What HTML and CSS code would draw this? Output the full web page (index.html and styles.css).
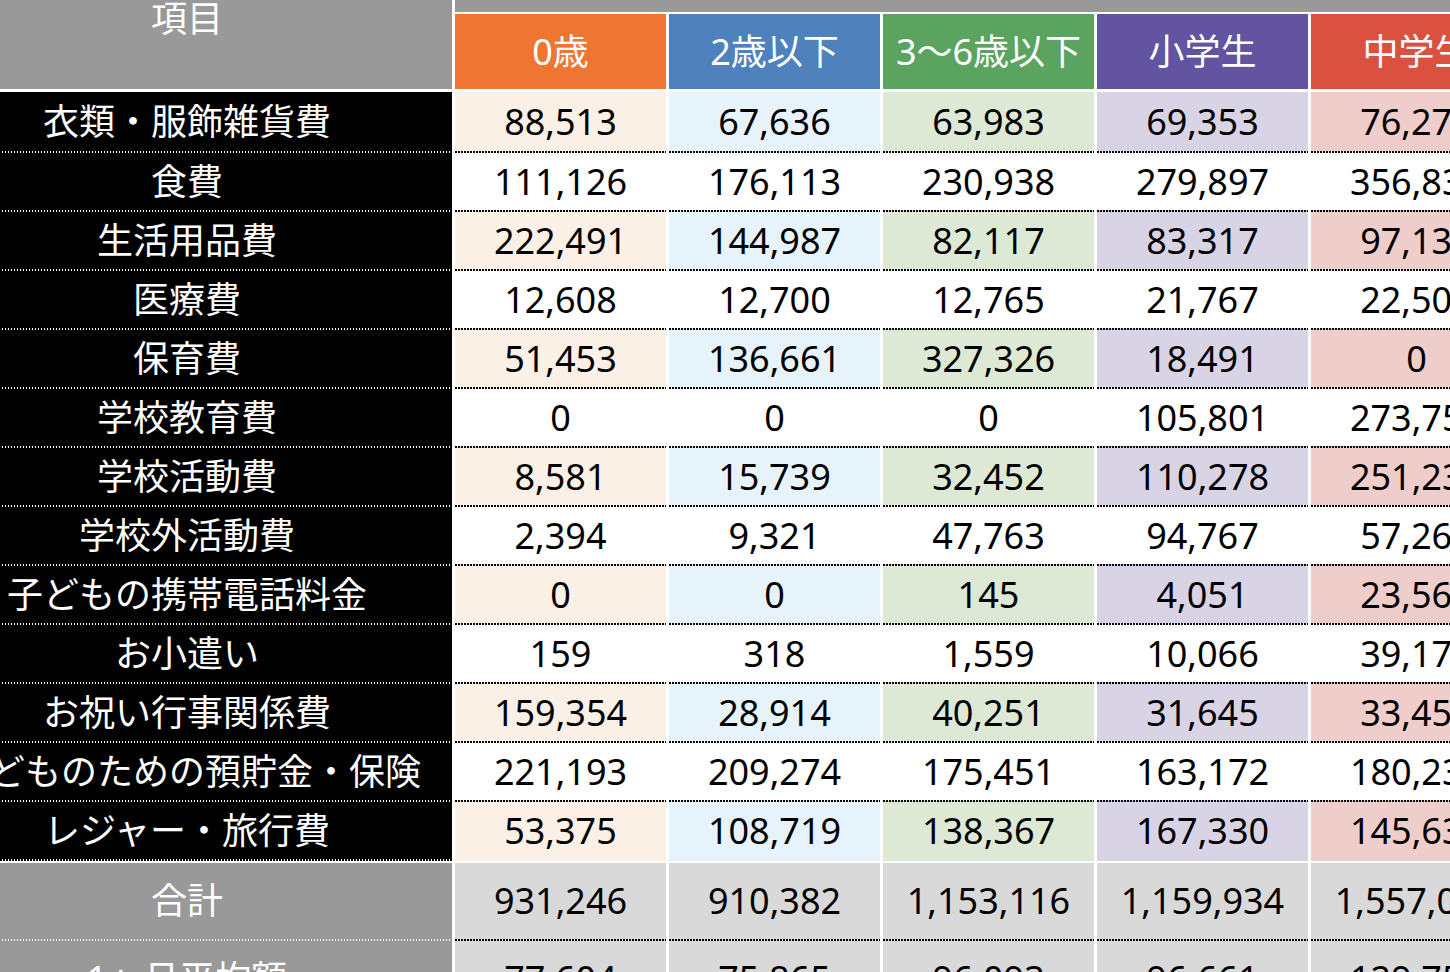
FILE: index.html
```html
<!DOCTYPE html>
<html lang="ja">
<head>
<meta charset="utf-8">
<title>子どもにかかる費用</title>
<link rel="stylesheet" href="styles.css">
</head>
<body>
<div class="sheet">
  <div class="head">
    <div class="h-item">項目</div>
    <div class="h-group">年齢区分</div>
    <div class="h-age a1">0歳</div>
    <div class="h-age a2">2歳以下</div>
    <div class="h-age a3">3〜6歳以下</div>
    <div class="h-age a4">小学生</div>
    <div class="h-age a5">中学生</div>
  </div>

  <div class="row alt"><div class="lab">衣類・服飾雑貨費</div><div class="v a1">88,513</div><div class="v a2">67,636</div><div class="v a3">63,983</div><div class="v a4">69,353</div><div class="v a5">76,276</div></div>
  <div class="row"><div class="lab">食費</div><div class="v a1">111,126</div><div class="v a2">176,113</div><div class="v a3">230,938</div><div class="v a4">279,897</div><div class="v a5">356,836</div></div>
  <div class="row alt"><div class="lab">生活用品費</div><div class="v a1">222,491</div><div class="v a2">144,987</div><div class="v a3">82,117</div><div class="v a4">83,317</div><div class="v a5">97,133</div></div>
  <div class="row"><div class="lab">医療費</div><div class="v a1">12,608</div><div class="v a2">12,700</div><div class="v a3">12,765</div><div class="v a4">21,767</div><div class="v a5">22,505</div></div>
  <div class="row alt"><div class="lab">保育費</div><div class="v a1">51,453</div><div class="v a2">136,661</div><div class="v a3">327,326</div><div class="v a4">18,491</div><div class="v a5">0</div></div>
  <div class="row"><div class="lab">学校教育費</div><div class="v a1">0</div><div class="v a2">0</div><div class="v a3">0</div><div class="v a4">105,801</div><div class="v a5">273,756</div></div>
  <div class="row alt"><div class="lab">学校活動費</div><div class="v a1">8,581</div><div class="v a2">15,739</div><div class="v a3">32,452</div><div class="v a4">110,278</div><div class="v a5">251,231</div></div>
  <div class="row"><div class="lab">学校外活動費</div><div class="v a1">2,394</div><div class="v a2">9,321</div><div class="v a3">47,763</div><div class="v a4">94,767</div><div class="v a5">57,261</div></div>
  <div class="row alt"><div class="lab">子どもの携帯電話料金</div><div class="v a1">0</div><div class="v a2">0</div><div class="v a3">145</div><div class="v a4">4,051</div><div class="v a5">23,561</div></div>
  <div class="row"><div class="lab">お小遣い</div><div class="v a1">159</div><div class="v a2">318</div><div class="v a3">1,559</div><div class="v a4">10,066</div><div class="v a5">39,177</div></div>
  <div class="row alt"><div class="lab">お祝い行事関係費</div><div class="v a1">159,354</div><div class="v a2">28,914</div><div class="v a3">40,251</div><div class="v a4">31,645</div><div class="v a5">33,453</div></div>
  <div class="row"><div class="lab">子どものための預貯金・保険</div><div class="v a1">221,193</div><div class="v a2">209,274</div><div class="v a3">175,451</div><div class="v a4">163,172</div><div class="v a5">180,232</div></div>
  <div class="row alt last"><div class="lab">レジャー・旅行費</div><div class="v a1">53,375</div><div class="v a2">108,719</div><div class="v a3">138,367</div><div class="v a4">167,330</div><div class="v a5">145,636</div></div>

  <div class="total first"><div class="lab">合計</div><div class="v">931,246</div><div class="v">910,382</div><div class="v">1,153,116</div><div class="v">1,159,934</div><div class="v">1,557,057</div></div>
  <div class="total"><div class="lab">1ヶ月平均額</div><div class="v">77,604</div><div class="v">75,865</div><div class="v">96,093</div><div class="v">96,661</div><div class="v">129,755</div></div>
</div>
</body>
</html>
```

FILE: styles.css
```css
html, body {
  margin: 0;
  padding: 0;
  background: #fff;
  overflow: hidden;
}

body {
  font-family: "Noto Sans", "Noto Sans CJK JP", sans-serif;
  font-size: 36px;
  line-height: 1;
  color: #000;
}

.sheet {
  margin: -51px 0 0 -78px;
  width: max-content;
}

.head,
.row,
.total {
  display: grid;
  grid-template-columns: 530px repeat(5, 211px);
  column-gap: 3px;
}

.head > div,
.row > div,
.total > div {
  display: flex;
  align-items: center;
  justify-content: center;
  white-space: nowrap;
}

/* header */
.head {
  grid-template-rows: 63px 75px;
  row-gap: 2px;
  border-bottom: 3px solid #fff;
}

.h-item {
  grid-row: 1 / 3;
  background: #999999;
  color: #fff;
}

.h-group {
  grid-column: 2 / -1;
  background: #999999;
  color: #fff;
}

.h-age {
  color: #fff;
}

.h-age.a1 { background: #ee7632; }
.h-age.a2 { background: #4f81bd; }
.h-age.a3 { background: #5ba460; }
.h-age.a4 { background: #6254a1; }
.h-age.a5 { background: #da5140; }

/* data rows */
.row {
  height: 59px;
}

.row + .row {
  height: 59px;
}

.lab {
  background-color: #000;
  color: #fff;
}

.v {
  background-color: #fff;
}

.row.alt .v.a1 { background-color: #faf0e6; }
.row.alt .v.a2 { background-color: #e6f3fa; }
.row.alt .v.a3 { background-color: #dde8d5; }
.row.alt .v.a4 { background-color: #d9d3e6; }
.row.alt .v.a5 { background-color: #eecdca; }

/* dotted separators drawn per cell */
.row + .row > .lab,
.row.last > .lab,
.total > .lab {
  background-image: repeating-linear-gradient(90deg, transparent 0 2px, #fff 2px 3px);
  background-repeat: no-repeat;
  background-size: 100% 2px;
}

.row + .row > .v,
.row.last > .v,
.total > .v {
  background-image: repeating-linear-gradient(90deg, #000 0 2px, transparent 2px 3px);
  background-repeat: no-repeat;
  background-size: 100% 2px;
}

.row + .row > div {
  background-position: left top;
  padding-top: 2px;
  height: 57px;
}

.row.last {
  height: 61px;
}

.row.last > div {
  background-image:
    repeating-linear-gradient(90deg, #000 0 2px, transparent 2px 3px),
    repeating-linear-gradient(90deg, #000 0 2px, transparent 2px 3px);
  background-position: left top, left bottom;
  background-size: 100% 2px, 100% 2px;
  padding-bottom: 2px;
}

.row.last > .lab {
  background-image:
    repeating-linear-gradient(90deg, transparent 0 2px, #fff 2px 3px),
    repeating-linear-gradient(90deg, transparent 0 2px, #fff 2px 3px);
}

/* totals */
.total {
  height: 78px;
}

.total.first {
  margin-top: 2px;
}

.total > div {
  background-position: left bottom;
  padding-bottom: 2px;
}

.total > .lab {
  background-color: #999999;
  color: #fff;
}

.total > .v {
  background-color: #d9d9d9;
}
```
